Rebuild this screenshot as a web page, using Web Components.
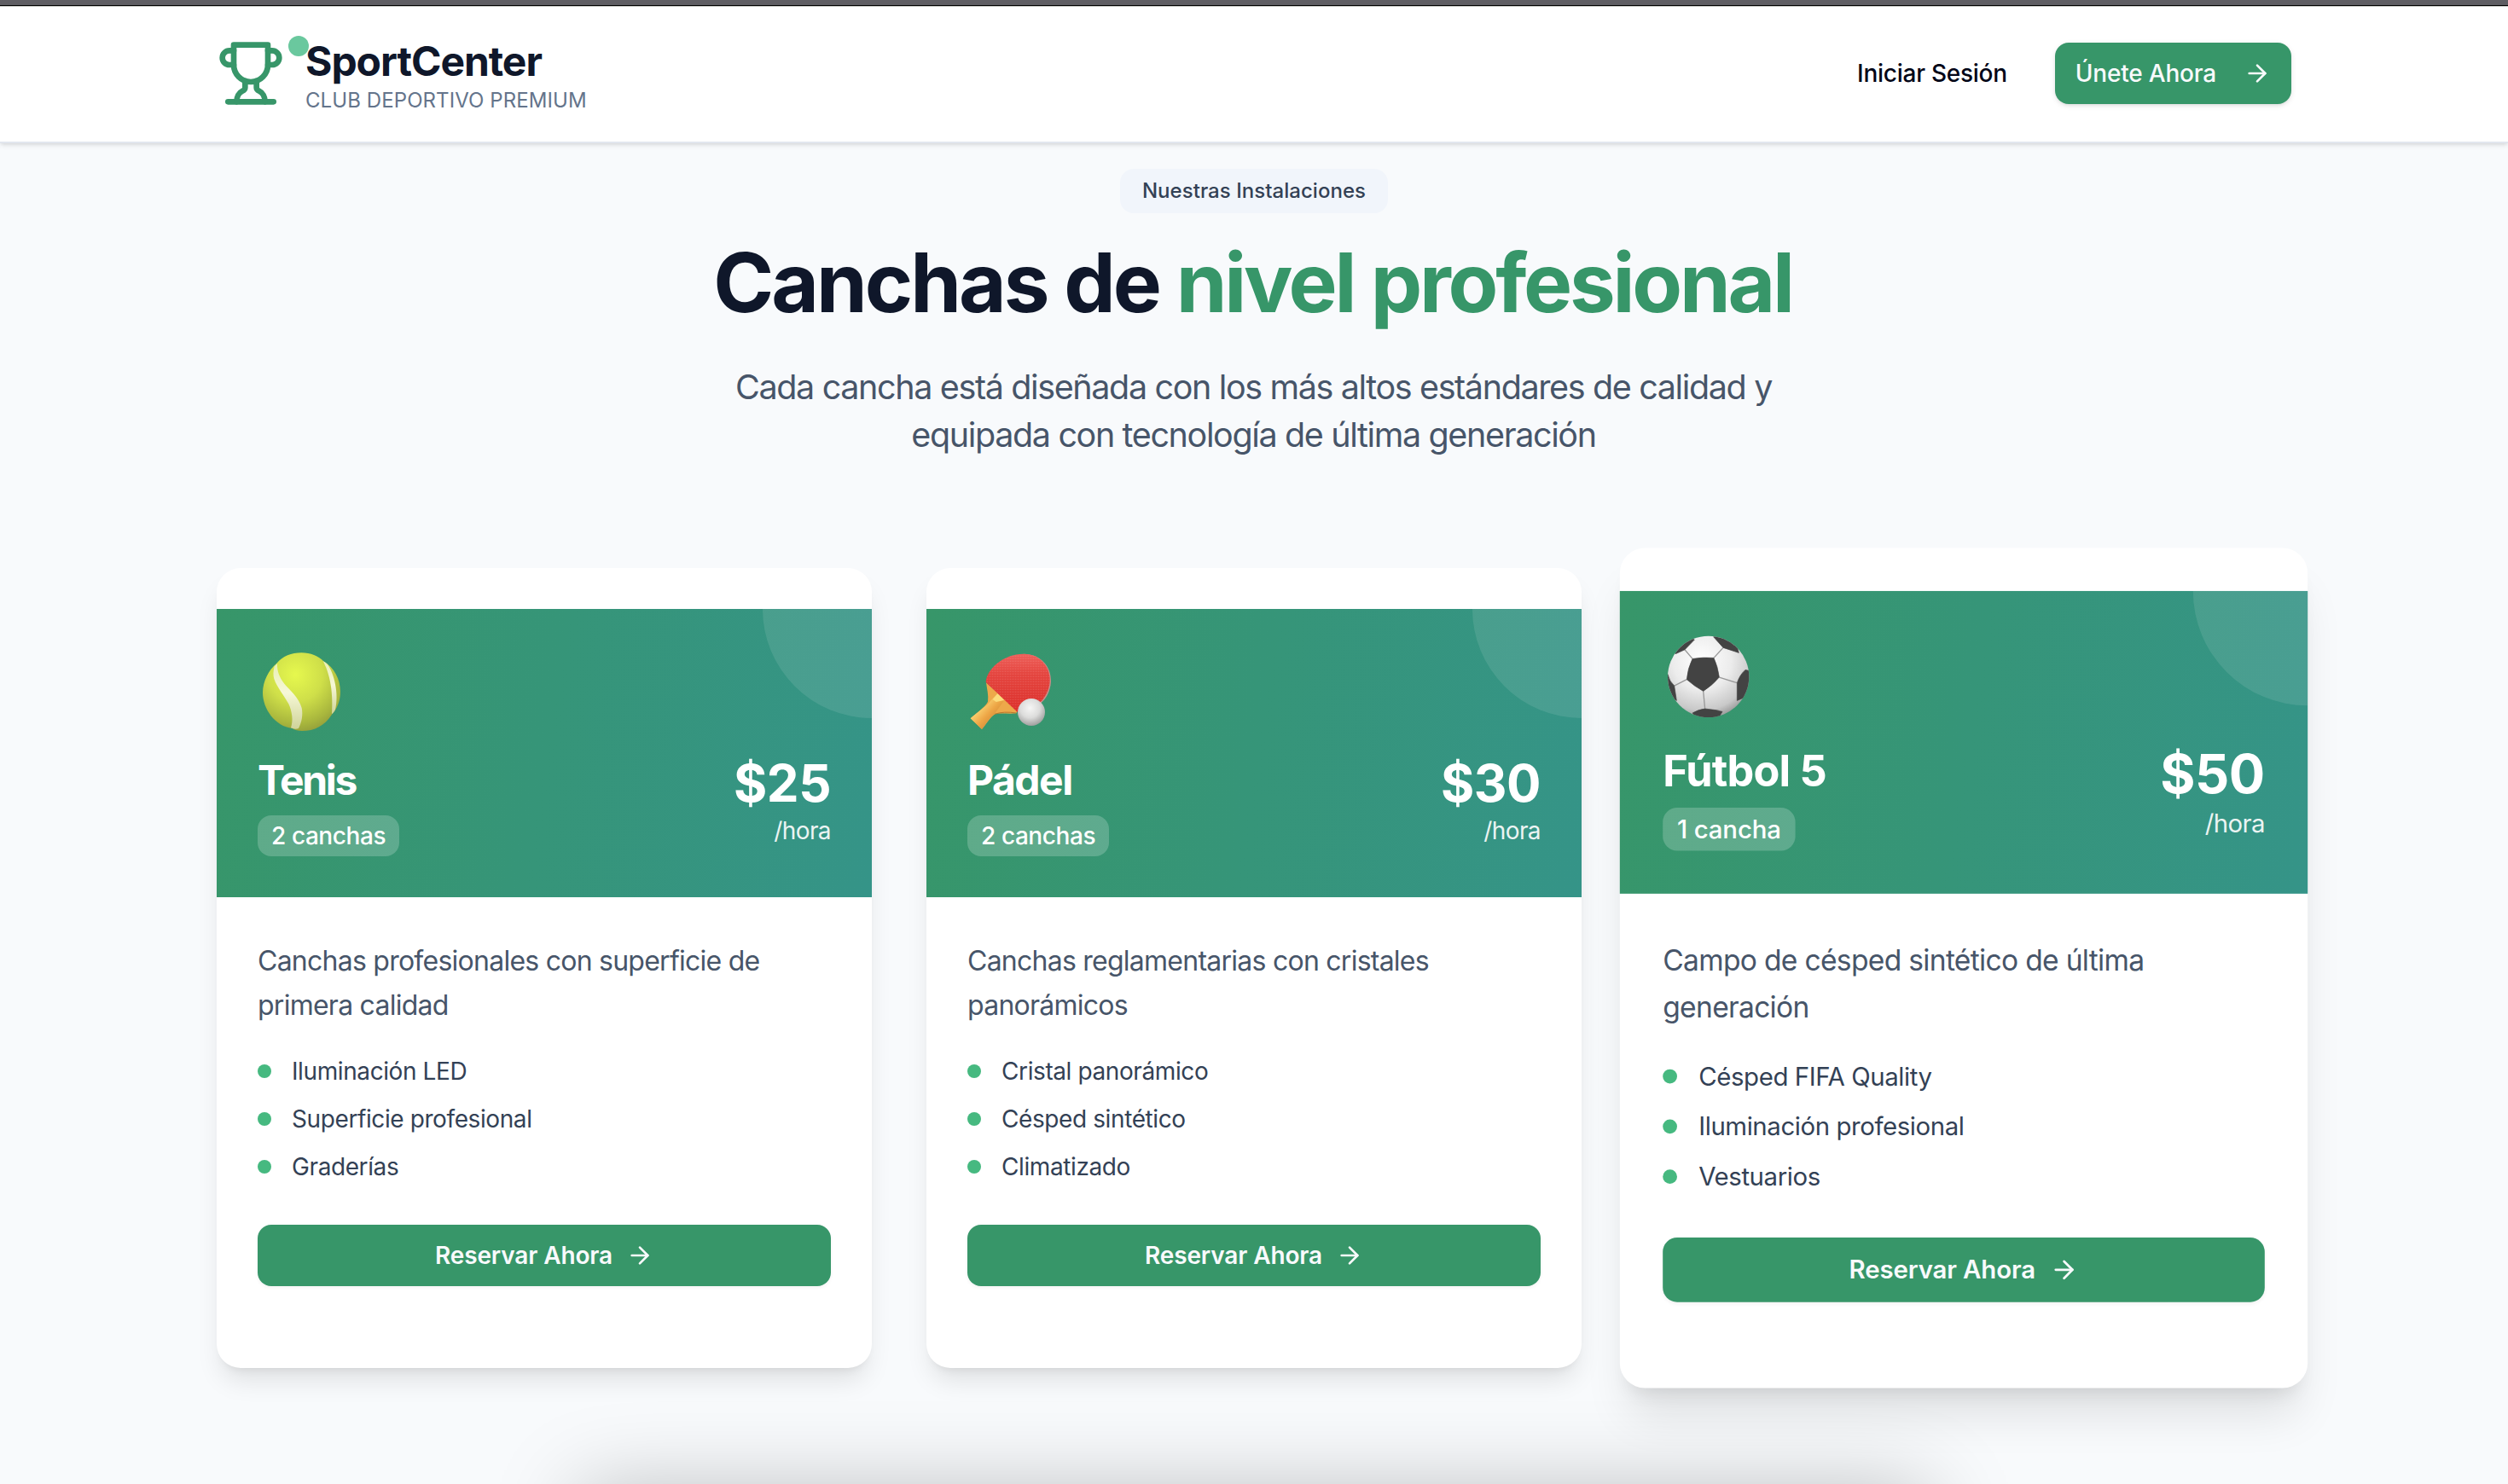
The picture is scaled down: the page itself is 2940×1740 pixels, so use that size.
<!DOCTYPE html>
<html lang="es">
<head>
<meta charset="utf-8">
<title>SportCenter</title>
<style>
  html, body { margin: 0; padding: 0; }
  body {
    width: 2940px; height: 1740px; overflow: hidden;
    background: #f8fafc; color: #020617;
    font-family: Inter, "Liberation Sans", sans-serif; font-size: 32px;
  }
</style>
</head>
<body>
<sport-page></sport-page>

<script>
const define = (name, html, init) => {
  const tpl = document.createElement('template');
  tpl.innerHTML = html;
  customElements.define(name, class extends HTMLElement {
    constructor() {
      super();
      this.attachShadow({ mode: 'open' }).append(tpl.content.cloneNode(true));
    }
    connectedCallback() { if (init) init(this, this.shadowRoot); }
  });
};

define('arrow-icon', `
<style>:host{display:block;width:32px;height:32px;flex:none}svg{display:block}</style>
<svg width="32" height="32" viewBox="0 0 24 24" fill="none" stroke="currentColor" stroke-width="2" stroke-linecap="round" stroke-linejoin="round"><path d="M5 12h14"/><path d="m12 5 7 7-7 7"/></svg>`);

define('trophy-icon', `
<style>:host{display:block;width:80px;height:80px;color:#379669}svg{display:block}</style>
<svg width="80" height="80" viewBox="0 0 24 24" fill="none" stroke="currentColor" stroke-width="2" stroke-linecap="round" stroke-linejoin="round"><path d="M6 9H4.5a2.5 2.5 0 0 1 0-5H6"/><path d="M18 9h1.5a2.5 2.5 0 0 0 0-5H18"/><path d="M4 22h16"/><path d="M10 14.66V17c0 .55-.47.98-.97 1.21C7.85 18.75 7 20.24 7 22"/><path d="M14 14.66V17c0 .55.47.98.97 1.21C16.15 18.75 17 20.24 17 22"/><path d="M18 2H6v7a6 6 0 0 0 12 0V2Z"/></svg>`);

const art = {
  tennis: `<g transform="translate(-12 -12) scale(.33333)">
    <defs><radialGradient id="b" cx=".42" cy=".28" r=".78"><stop offset="0" stop-color="#e6f84e"/><stop offset=".45" stop-color="#cfdf49"/><stop offset=".8" stop-color="#a9b73d"/><stop offset="1" stop-color="#8f9a3a"/></radialGradient>
    <linearGradient id="s" x1="0" y1="0" x2="0" y2="1"><stop offset="0" stop-color="#e9efb5"/><stop offset=".45" stop-color="#f6f8d6"/><stop offset="1" stop-color="#cfd39a"/></linearGradient></defs>
    <path d="M103 83C124 58 155 46 190 46C222 46 250 57 269 77C305 97 327 139 327 183C327 215 316 243 297 263C273 302 236 321 192 321C178 321 167 318 158 312C98 305 54 244 54 186C54 147 75 106 103 83Z" fill="url(#b)"/>
    <path d="M95 94C91 112 90 124 94 138C104 168 128 194 145 226C157 252 162 284 153 310C163 315 172 315 180 312C191 290 196 265 191 240C181 203 152 181 130 155C112 132 104 110 105 84Z" fill="url(#s)"/>
    <path d="M266 76C286 112 303 172 297 262C303 257 306 252 309 246C323 192 305 116 281 86C276 81 271 78 266 76Z" fill="url(#s)"/></g>`,
  paddle: `<g transform="translate(-14 -12) scale(.33333)">
    <defs><linearGradient id="r" x1="0" y1="0" x2="0" y2="1"><stop offset="0" stop-color="#ee5f59"/><stop offset=".35" stop-color="#e4443e"/><stop offset="1" stop-color="#dc2f2a"/></linearGradient>
    <linearGradient id="h" x1="0" y1="0" x2="1" y2="1"><stop offset=".3" stop-color="#fcd877"/><stop offset=".55" stop-color="#eda545"/><stop offset=".8" stop-color="#c88536"/></linearGradient>
    <radialGradient id="w" cx=".45" cy=".35" r=".65"><stop offset="0" stop-color="#f6f6f5"/><stop offset=".55" stop-color="#dcdcdb"/><stop offset="1" stop-color="#a0a09f"/></radialGradient>
    <pattern id="d" width="9" height="9" patternUnits="userSpaceOnUse"><rect width="5" height="4" x="2" y="2" fill="#fff" opacity=".11"/></pattern></defs>
    <path d="M240 50C300 50 338 95 336 148C334 182 318 210 300 224L290 215L300 80Z" fill="#c88f8b"/>
    <path d="M108 151L218 250L214 259C188 262 160 257 140 261C124 270 108 298 93 315L53 277C78 254 106 236 114 218C117 196 111 174 108 151Z" fill="#eda94a"/>
    <path d="M149 189L172 213L137 262C122 272 107 298 93 315L53 277C82 252 112 232 125 214Z" fill="url(#h)"/>
    <path d="M149 189L172 213L143 219L131 210Z" fill="#fcdc7c"/>
    <path d="M138 262Q170 251 214 258" fill="none" stroke="#b8772d" stroke-width="3"/>
    <path d="M107 150C108 105 168 50 240 50C297 50 334 95 332 146C330 178 315 204 298 220L218 255Z" fill="url(#r)"/>
    <path d="M107 150C108 105 168 50 240 50C297 50 334 95 332 146C330 178 315 204 298 220L218 255Z" fill="url(#d)"/>
    <circle cx="267" cy="255" r="48" fill="url(#w)"/></g>`,
  soccer: `<g transform="translate(-8.76 -12.67) scale(.31746)">
    <defs><radialGradient id="o" cx=".42" cy=".3" r=".72"><stop offset="0" stop-color="#fff"/><stop offset=".5" stop-color="#ececec"/><stop offset=".85" stop-color="#c9c9c9"/><stop offset="1" stop-color="#9c9c9c"/></radialGradient>
    <clipPath id="c"><circle cx="188" cy="190" r="143"/></clipPath></defs>
    <circle cx="188" cy="190" r="143" fill="url(#o)"/>
    <g clip-path="url(#c)"><g fill="none" stroke="#999" stroke-width="4"><path d="M132 127L105 95M207 124L240 88M226 192L289 212M170 241L176 304M112 200L68 222"/></g>
    <g fill="#434343" stroke="#434343" stroke-width="2" stroke-linejoin="round"><path d="M132 127Q170 121 207 124Q221 154 226 192Q203 220 170 241Q139 224 112 200Q115 161 132 127Z"/><path d="M72 110L105 95L139 60L122 52L65 90Z"/><path d="M206 50L240 88L295 106L285 70L240 40Z"/><path d="M318 166Q297 185 289 212L289 274L345 250L335 170Z"/><path d="M45 182Q51 207 68 222L76 274L36 250Z"/><path d="M132 318Q155 305 176 303Q210 306 237 313L220 340L150 340Z"/></g></g></g>`
};

define('court-emoji', `<style>:host{display:block;height:96px}svg{display:block;overflow:visible}</style>
<svg width="104" height="96" viewBox="0 0 104 96" aria-hidden="true"></svg>`,
  (el, root) => { root.querySelector('svg').innerHTML = art[el.getAttribute('kind')]; });

define('primary-button', `
<style>
  :host{display:flex;align-items:center;justify-content:center;gap:var(--gap,16px);height:72px;box-sizing:border-box;padding:0 24px;
    background:#379669;color:#f8fafc;border-radius:16px;font-size:28px;line-height:40px;font-weight:500;white-space:nowrap;
    box-shadow:0 2px 4px rgba(0,0,0,.05)}
</style><span><slot></slot></span><arrow-icon></arrow-icon>`);

define('site-header', `
<style>
  :host{display:block;position:relative;z-index:1;background:#fff;box-shadow:0 2px 6px rgba(0,0,0,.1),0 2px 4px -2px rgba(0,0,0,.1)}
  .strip{height:6px;background:#5f5e63;border-bottom:1px solid #000}
  .edge{height:1px;background:#c9cac5}
  .bar{height:156px;padding:0 254px 2px;border-bottom:2px solid #e2e6ee;display:flex;align-items:center;justify-content:space-between}
  .brand{display:flex;align-items:center;gap:24px}
  .logo{position:relative;width:80px}
  .dot{position:absolute;left:84px;top:-4px;width:24px;height:24px;border-radius:50%;background:#6ac89e}
  .name{padding-top:2px;font-size:48px;line-height:61px;font-weight:700;color:#0f172a;letter-spacing:-1.05px}
  .tag{font-size:24px;line-height:32px;color:#64748b;letter-spacing:.08px}
  .nav{display:flex;align-items:center;gap:56px}
  .login{font-size:28px;font-weight:500;line-height:40px;letter-spacing:-.26px}
  primary-button{--gap:32px;letter-spacing:-.2px;box-shadow:0 2px 6px rgba(0,0,0,.1),0 2px 4px -2px rgba(0,0,0,.1)}
</style>
<div class="strip"></div><div class="edge"></div>
<div class="bar">
  <div class="brand"><div class="logo"><trophy-icon></trophy-icon><i class="dot"></i></div>
    <div><div class="name">SportCenter</div><div class="tag">CLUB DEPORTIVO PREMIUM</div></div></div>
  <div class="nav"><span class="login">Iniciar Sesión</span><primary-button>Únete Ahora</primary-button></div>
</div>`);

define('section-intro', `
<style>
  :host{display:flex;flex-direction:column;align-items:center;padding-top:30px;text-align:center}
  .badge{height:52px;line-height:52px;padding:0 26px;border-radius:16px;background:#f1f5fb;color:#334155;font-size:24px;font-weight:500;letter-spacing:.04px}
  h1{margin:33px 3px 47px 0;font-size:96px;line-height:96px;font-weight:700;color:#0f172a;letter-spacing:-3px;white-space:nowrap}
  em{font-style:normal;color:#379669;letter-spacing:-3.25px}
  p{margin:0 1px 0 0;font-size:39.5px;line-height:56px;color:#475569;letter-spacing:-1.37px;white-space:nowrap}
</style>
<div class="badge">Nuestras Instalaciones</div>
<h1>Canchas de <em>nivel profesional</em></h1>
<p>Cada cancha está diseñada con los más altos estándares de calidad y<br>equipada con tecnología de última generación</p>`);

define('feature-item', `
<style>:host{display:flex;align-items:center;gap:24px;font-size:28px;line-height:40px;color:#334155;letter-spacing:-.4px}
i{width:16px;height:16px;border-radius:50%;background:#46b980}</style><i></i><span><slot></slot></span>`);

define('court-card', `
<style>
  :host{display:flex;flex-direction:column;gap:48px;box-sizing:border-box;width:768px;height:938px;padding:48px 0;background:#fff;border-radius:28px;
    box-shadow:0 20px 30px -6px rgba(0,0,0,.1),0 8px 12px -8px rgba(0,0,0,.1)}
  :host([active]){transform:scale(1.05);box-shadow:0 40px 50px -10px rgba(0,0,0,.1),0 16px 20px -12px rgba(0,0,0,.1)}
  .hero{position:relative;overflow:hidden;box-sizing:border-box;height:338px;padding:48px;background:linear-gradient(100deg,#379669,#359488);color:#fff;
    display:flex;flex-direction:column;gap:24px}
  .circle{position:absolute;right:-128px;top:-128px;width:256px;height:256px;border-radius:50%;background:rgba(255,255,255,.1)}
  .row{display:flex;justify-content:space-between;align-items:flex-start}
  .title{font-size:48px;line-height:66px;font-weight:700;letter-spacing:var(--title-tracking,-1px)}
  .count{margin-top:8px;width:max-content;height:48px;line-height:48px;padding:0 16px;border-radius:16px;background:rgba(255,255,255,.2);font-size:28px;font-weight:500;letter-spacing:var(--count-tracking,-.42px)}
  .price{text-align:right}
  .amount{font-size:60px;line-height:73px;font-weight:700;letter-spacing:-.5px}
  .unit{font-size:28px;line-height:39px;opacity:.9;letter-spacing:-.6px}
  .body{padding:1px 48px 0;display:flex;flex-direction:column}
  p{margin:0;font-size:32px;line-height:52px;color:#475569;letter-spacing:var(--text-tracking,-.75px)}
  .list{display:flex;flex-direction:column;gap:16px;margin:31px 0 48px}
  primary-button{font-weight:600;letter-spacing:-.14px}
</style>
<div class="hero"><i class="circle"></i><slot name="icon"></slot>
  <div class="row"><div><div class="title"><slot name="title"></slot></div><div class="count"><slot name="count"></slot></div></div>
  <div class="price"><div class="amount"><slot name="price"></slot></div><div class="unit">/hora</div></div></div></div>
<div class="body"><p><slot name="text"></slot></p><div class="list"><slot></slot></div>
  <primary-button>Reservar Ahora</primary-button></div>`);

define('sport-page', `
<style>
  :host{display:flex;flex-direction:column;width:2940px;height:1740px;overflow:hidden}
  .grid{display:grid;grid-template-columns:repeat(3,768px);gap:64px;margin:128px 254px 0}
  .next{flex:none;align-self:center;width:1580px;height:100px;margin-top:144px;box-shadow:0 0 100px rgba(0,0,0,.25)}
</style>
<site-header></site-header>
<section-intro></section-intro>
<div class="grid">
  <court-card style="--title-tracking:-2.3px"><court-emoji slot="icon" kind="tennis"></court-emoji><span slot="title">Tenis</span><span slot="count">2 canchas</span><span slot="price">$25</span>
    <span slot="text">Canchas profesionales con superficie de<br>primera calidad</span>
    <feature-item>Iluminación LED</feature-item><feature-item>Superficie profesional</feature-item><feature-item>Graderías</feature-item></court-card>
  <court-card style="--title-tracking:-1.5px"><court-emoji slot="icon" kind="paddle"></court-emoji><span slot="title">Pádel</span><span slot="count">2 canchas</span><span slot="price">$30</span>
    <span slot="text">Canchas reglamentarias con cristales<br>panorámicos</span>
    <feature-item>Cristal panorámico</feature-item><feature-item>Césped sintético</feature-item><feature-item>Climatizado</feature-item></court-card>
  <court-card active style="--title-tracking:-.8px;--count-tracking:-.15px;--text-tracking:-.67px"><court-emoji slot="icon" kind="soccer"></court-emoji><span slot="title">Fútbol 5</span><span slot="count">1 cancha</span><span slot="price">$50</span>
    <span slot="text">Campo de césped sintético de última<br>generación</span>
    <feature-item>Césped FIFA Quality</feature-item><feature-item>Iluminación profesional</feature-item><feature-item>Vestuarios</feature-item></court-card>
</div>
<div class="next"></div>`);
</script>
</body>
</html>
